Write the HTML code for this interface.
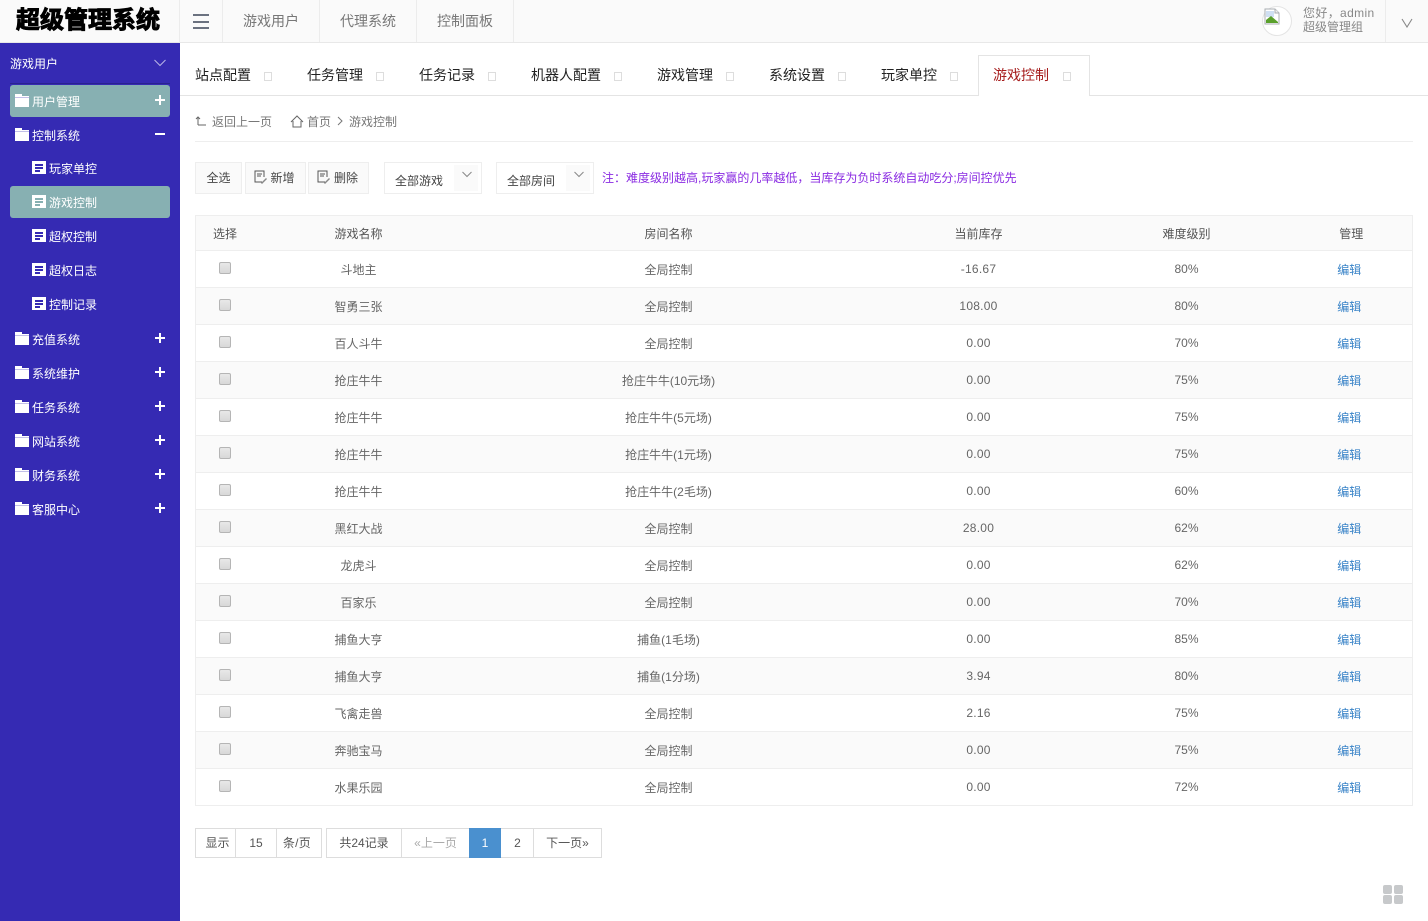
<!DOCTYPE html>
<html lang="zh-CN">
<head>
<meta charset="utf-8">
<title>游戏控制</title>
<style>
*{box-sizing:border-box}
html,body{margin:0;padding:0;width:1428px;height:921px;overflow:hidden;background:#fff}
body{position:relative;font-family:"Liberation Sans","Noto Sans CJK SC","WenQuanYi Zen Hei",sans-serif;font-size:12px;color:#555}
.a{position:absolute;white-space:nowrap}
#top{position:absolute;left:0;top:0;width:1428px;height:43px;background:#fafafa;border-bottom:1px solid #e8e8e8}
.logo{left:16px;top:2px;font-size:24px;line-height:32px;font-weight:700;color:#000;-webkit-text-stroke:1px #000;font-family:"Noto Sans CJK SC",sans-serif}
.vl{position:absolute;top:0;width:1px;height:42px;background:#ececec}
.burger{position:absolute;left:193px;width:16px;height:2px;background:#6b7280}
.nav{position:absolute;top:0;height:42px;line-height:42px;font-size:14px;color:#777;text-align:center;background:#fafafa}
#side{position:absolute;left:0;top:43px;width:180px;height:878px;background:#352ab3;color:#fff}
.sh{position:absolute;left:10px;top:13px;line-height:16px}
.sline{position:absolute;left:10px;top:40px;width:160px;height:1px;background:#2a2290}
.sel{position:absolute;left:10px;width:160px;height:32px;background:#87b0b2;border-radius:3px}
.it{position:absolute;line-height:16px;color:#fff;white-space:nowrap}
.folder{position:absolute;left:15px;width:14px;height:11px;background:#fff}
.folder:before{content:"";position:absolute;left:0;top:-2px;width:7px;height:2px;background:#fff}
.folder:after{content:"";position:absolute;left:0;top:1px;width:14px;height:1px;background:rgba(53,42,179,.3)}
.doc{position:absolute;left:32px;width:14px;height:13px;background:#fff}
.doc:before{content:"";position:absolute;left:3px;top:3px;width:8px;height:2px;background:#352ab3;box-shadow:0 3px 0 #352ab3}
.doc:after{content:"";position:absolute;left:3px;top:9px;width:5px;height:2px;background:#352ab3}
.doc.on:before,.doc.on:after{background:#87b0b2;box-shadow:none}
.doc.on:before{box-shadow:0 3px 0 #87b0b2}
.pl{position:absolute;left:155px;width:10px;height:2px;background:#fff}
.pl.p:after{content:"";position:absolute;left:4px;top:-4px;width:2px;height:10px;background:#fff}
.tab{position:absolute;top:67px;font-size:14px;line-height:16px;color:#222;white-space:nowrap}
.tabx{position:absolute;top:72px;width:8px;height:9px;border:1px solid #ddd;background:#fff}
.tbar{position:absolute;left:180px;top:95px;width:1248px;height:1px;background:#e4e4e4}
.acttab{position:absolute;left:978px;top:55px;width:112px;height:41px;background:#fff;border:1px solid #e4e4e4;border-bottom:0}
.btn{position:absolute;top:162px;height:32px;background:#fafafa;border:1px solid #eee;line-height:30px;color:#444;text-align:center}
.selb{position:absolute;top:162px;height:32px;width:98px;background:#fff;border:1px solid #eee;color:#444;line-height:36px;padding-left:10px}
.selb i{position:absolute;right:3px;top:2px;width:24px;height:26px;background:#fafafa}
.selb svg{position:absolute;right:9px;top:8px}
table{position:absolute;left:195px;top:215px;width:1217px;border-collapse:collapse;table-layout:fixed;color:#666}
td,th{border:1px solid #eee;border-left:0;border-right:0;text-align:center;font-weight:400;padding:0;height:37px}
table{border-left:1px solid #eee;border-right:1px solid #eee}
th{height:35px;background:#fafafa;color:#555}
tbody tr:nth-child(odd) td{background:#fff}
tbody tr:nth-child(even) td{background:#fafafa}
td:nth-child(4){letter-spacing:.25px}
.ck{display:block;width:12px;height:12px;margin:-2px 0 0 23px;border:1px solid #b5b5b5;border-radius:2px;background:linear-gradient(#e8e8e8,#d8d8d8)}
a{color:#3a84c8;text-decoration:none}
.pg{position:absolute;top:828px;height:30px;line-height:29px;text-align:center;border:1px solid #ddd;border-left:0;color:#555;background:#fff}
.crumb{position:absolute;top:114px;line-height:16px;color:#777;white-space:nowrap}
.gd{position:absolute;width:9px;height:9px;background:#c7c9cb;border-radius:2px}
</style>
</head>
<body>
<div id="top">
<div class="a logo">超级管理系统</div>
<div class="vl" style="left:179px"></div>
<div class="burger" style="top:14px"></div><div class="burger" style="top:21px"></div><div class="burger" style="top:27px"></div>
<div class="vl" style="left:222px"></div>
<div class="nav" style="left:223px;width:96px">游戏用户</div><div class="vl" style="left:319px"></div>
<div class="nav" style="left:320px;width:96px">代理系统</div><div class="vl" style="left:416px"></div>
<div class="nav" style="left:417px;width:96px">控制面板</div><div class="vl" style="left:513px"></div>
<div class="a" style="left:1262px;top:6px;width:30px;height:30px;border:1px solid #e4e4e4;border-radius:50%;background:#fff"></div>
<svg class="a" style="left:1263px;top:8px" width="18" height="18" viewBox="0 0 18 18"><path d="M2 1h10l4 4v11H2z" fill="#fff" stroke="#a8adb2"/><path d="M12 1v4h4" fill="#eee" stroke="#a8adb2"/><path d="M3 3h8v6H3z" fill="#cfdff2"/><path d="M3 15V12l5-4 7 6v1z" fill="#5aa02c"/></svg>
<div class="a" style="left:1303px;top:6px;line-height:14px;color:#888;font-size:12px;letter-spacing:.35px">您好，admin</div>
<div class="a" style="left:1303px;top:20px;line-height:14px;color:#888;font-size:12px">超级管理组</div>
<div class="vl" style="left:1385px"></div>
<svg class="a" style="left:1401px;top:18px" width="12" height="10" viewBox="0 0 12 10"><path d="M1 1l5 8 5-8" fill="none" stroke="#888" stroke-width="1.1"/></svg>
</div>

<div id="side">
<div class="sh">游戏用户</div>
<svg class="a" style="left:154px;top:16px" width="12" height="8" viewBox="0 0 12 8"><path d="M.5 1l5.500 5.500L11.500 1" fill="none" stroke="#b9b5e6" stroke-width="1"/></svg>
<div class="sline"></div>
<div class="sel" style="top:42px"></div>
<div class="folder" style="top:53px"></div><div class="it" style="left:32px;top:51px">用户管理</div><div class="pl p" style="top:56px"></div>
<div class="folder" style="top:87px"></div><div class="it" style="left:32px;top:85px">控制系统</div><div class="pl" style="top:90px"></div>
<div class="doc" style="top:118px"></div><div class="it" style="left:49px;top:118px">玩家单控</div>
<div class="sel" style="top:143px"></div>
<div class="doc on" style="top:152px"></div><div class="it" style="left:49px;top:152px">游戏控制</div>
<div class="doc" style="top:186px"></div><div class="it" style="left:49px;top:186px">超权控制</div>
<div class="doc" style="top:220px"></div><div class="it" style="left:49px;top:220px">超权日志</div>
<div class="doc" style="top:254px"></div><div class="it" style="left:49px;top:254px">控制记录</div>
<div class="folder" style="top:291px"></div><div class="it" style="left:32px;top:289px">充值系统</div><div class="pl p" style="top:294px"></div>
<div class="folder" style="top:325px"></div><div class="it" style="left:32px;top:323px">系统维护</div><div class="pl p" style="top:328px"></div>
<div class="folder" style="top:359px"></div><div class="it" style="left:32px;top:357px">任务系统</div><div class="pl p" style="top:362px"></div>
<div class="folder" style="top:393px"></div><div class="it" style="left:32px;top:391px">网站系统</div><div class="pl p" style="top:396px"></div>
<div class="folder" style="top:427px"></div><div class="it" style="left:32px;top:425px">财务系统</div><div class="pl p" style="top:430px"></div>
<div class="folder" style="top:461px"></div><div class="it" style="left:32px;top:459px">客服中心</div><div class="pl p" style="top:464px"></div>
</div>

<div class="tbar"></div>
<div class="acttab"></div>
<div class="tab" style="left:195px">站点配置</div><div class="tabx" style="left:264px"></div>
<div class="tab" style="left:307px">任务管理</div><div class="tabx" style="left:376px"></div>
<div class="tab" style="left:419px">任务记录</div><div class="tabx" style="left:488px"></div>
<div class="tab" style="left:531px">机器人配置</div><div class="tabx" style="left:614px"></div>
<div class="tab" style="left:657px">游戏管理</div><div class="tabx" style="left:726px"></div>
<div class="tab" style="left:769px">系统设置</div><div class="tabx" style="left:838px"></div>
<div class="tab" style="left:881px">玩家单控</div><div class="tabx" style="left:950px"></div>
<div class="tab" style="left:993px;color:#a61c1c">游戏控制</div><div class="tabx" style="left:1063px"></div>

<svg class="a" style="left:195px;top:115px" width="12" height="12" viewBox="0 0 12 12"><path d="M3 10V2M1 4l2-2 2 2M3 10h8" fill="none" stroke="#666" stroke-width="1"/></svg>
<div class="crumb" style="left:212px">返回上一页</div>
<svg class="a" style="left:290px;top:115px" width="14" height="13" viewBox="0 0 14 13"><path d="M1 7l6-6 6 6M3 6v6h8V6" fill="none" stroke="#666" stroke-width="1"/></svg>
<div class="crumb" style="left:307px">首页</div>
<svg class="a" style="left:337px;top:116px" width="7" height="10" viewBox="0 0 7 10"><path d="M1 1l4 4-4 4" fill="none" stroke="#777" stroke-width="1"/></svg>
<div class="crumb" style="left:349px">游戏控制</div>
<div class="a" style="left:195px;top:141px;width:1218px;height:1px;background:#eee"></div>

<div class="btn" style="left:195px;width:47px">全选</div>
<div class="btn" style="left:245px;width:61px;padding-left:14px">新增</div>
<svg class="a" style="left:253px;top:169px" width="15" height="16" viewBox="0 0 15 16"><path d="M9 13H2V2h9v6M4 5h5M4 7h4" fill="none" stroke="#555" stroke-width="1"/><path d="M8 14l5-5 1 1-5 5z" fill="#888"/></svg>
<div class="btn" style="left:308px;width:61px;padding-left:15px">删除</div>
<svg class="a" style="left:316px;top:169px" width="15" height="16" viewBox="0 0 15 16"><path d="M9 13H2V2h9v6M4 5h5M4 7h4" fill="none" stroke="#555" stroke-width="1"/><path d="M8 14l5-5 1 1-5 5z" fill="#888"/></svg>
<div class="selb" style="left:384px">全部游戏<i></i><svg width="10" height="7" viewBox="0 0 10 7"><path d="M.5 1l4.500 4.500L9.500 1" fill="none" stroke="#888"/></svg></div>
<div class="selb" style="left:496px">全部房间<i></i><svg width="10" height="7" viewBox="0 0 10 7"><path d="M.5 1l4.500 4.500L9.500 1" fill="none" stroke="#888"/></svg></div>
<div class="a" style="left:602px;top:170px;line-height:16px;color:#8a2be2">注：难度级别越高,玩家赢的几率越低，当库存为负时系统自动吃分;房间控优先</div>

<table>
<colgroup><col style="width:60px"><col style="width:206px"><col style="width:414px"><col style="width:206px"><col style="width:210px"><col style="width:121px"></colgroup>
<thead><tr><th style="text-align:left;padding-left:17px">选择</th><th>游戏名称</th><th>房间名称</th><th>当前库存</th><th>难度级别</th><th style="padding-right:1px">管理</th></tr></thead>
<tbody>
<tr><td><i class="ck"></i></td><td>斗地主</td><td>全局控制</td><td>-16.67</td><td>80%</td><td style="padding-right:5px"><a href="#">编辑</a></td></tr>
<tr><td><i class="ck"></i></td><td>智勇三张</td><td>全局控制</td><td>108.00</td><td>80%</td><td style="padding-right:5px"><a href="#">编辑</a></td></tr>
<tr><td><i class="ck"></i></td><td>百人斗牛</td><td>全局控制</td><td>0.00</td><td>70%</td><td style="padding-right:5px"><a href="#">编辑</a></td></tr>
<tr><td><i class="ck"></i></td><td>抢庄牛牛</td><td>抢庄牛牛(10元场)</td><td>0.00</td><td>75%</td><td style="padding-right:5px"><a href="#">编辑</a></td></tr>
<tr><td><i class="ck"></i></td><td>抢庄牛牛</td><td>抢庄牛牛(5元场)</td><td>0.00</td><td>75%</td><td style="padding-right:5px"><a href="#">编辑</a></td></tr>
<tr><td><i class="ck"></i></td><td>抢庄牛牛</td><td>抢庄牛牛(1元场)</td><td>0.00</td><td>75%</td><td style="padding-right:5px"><a href="#">编辑</a></td></tr>
<tr><td><i class="ck"></i></td><td>抢庄牛牛</td><td>抢庄牛牛(2毛场)</td><td>0.00</td><td>60%</td><td style="padding-right:5px"><a href="#">编辑</a></td></tr>
<tr><td><i class="ck"></i></td><td>黑红大战</td><td>全局控制</td><td>28.00</td><td>62%</td><td style="padding-right:5px"><a href="#">编辑</a></td></tr>
<tr><td><i class="ck"></i></td><td>龙虎斗</td><td>全局控制</td><td>0.00</td><td>62%</td><td style="padding-right:5px"><a href="#">编辑</a></td></tr>
<tr><td><i class="ck"></i></td><td>百家乐</td><td>全局控制</td><td>0.00</td><td>70%</td><td style="padding-right:5px"><a href="#">编辑</a></td></tr>
<tr><td><i class="ck"></i></td><td>捕鱼大亨</td><td>捕鱼(1毛场)</td><td>0.00</td><td>85%</td><td style="padding-right:5px"><a href="#">编辑</a></td></tr>
<tr><td><i class="ck"></i></td><td>捕鱼大亨</td><td>捕鱼(1分场)</td><td>3.94</td><td>80%</td><td style="padding-right:5px"><a href="#">编辑</a></td></tr>
<tr><td><i class="ck"></i></td><td>飞禽走兽</td><td>全局控制</td><td>2.16</td><td>75%</td><td style="padding-right:5px"><a href="#">编辑</a></td></tr>
<tr><td><i class="ck"></i></td><td>奔驰宝马</td><td>全局控制</td><td>0.00</td><td>75%</td><td style="padding-right:5px"><a href="#">编辑</a></td></tr>
<tr><td><i class="ck"></i></td><td>水果乐园</td><td>全局控制</td><td>0.00</td><td>72%</td><td style="padding-right:5px"><a href="#">编辑</a></td></tr>
</tbody>
</table>

<div class="pg" style="left:195px;width:41px;border-left:1px solid #ddd;padding-left:4px">显示</div>
<div class="pg" style="left:236px;width:41px">15</div>
<div class="pg" style="left:277px;width:45px;padding-right:4px;letter-spacing:.3px">条/页</div>
<div class="pg" style="left:326px;width:76px;border-left:1px solid #ddd">共24记录</div>
<div class="pg" style="left:402px;width:68px;color:#aaa">«上一页</div>
<div class="pg" style="left:469px;width:32px;background:#4a90cf;color:#fff;border-color:#4a90cf;padding-left:1px">1</div>
<div class="pg" style="left:501px;width:33px;padding-left:1px">2</div>
<div class="pg" style="left:534px;width:68px">下一页»</div>

<div class="gd" style="left:1383px;top:885px"></div><div class="gd" style="left:1394px;top:885px"></div>
<div class="gd" style="left:1383px;top:895px"></div><div class="gd" style="left:1394px;top:895px"></div>
</body>
</html>
